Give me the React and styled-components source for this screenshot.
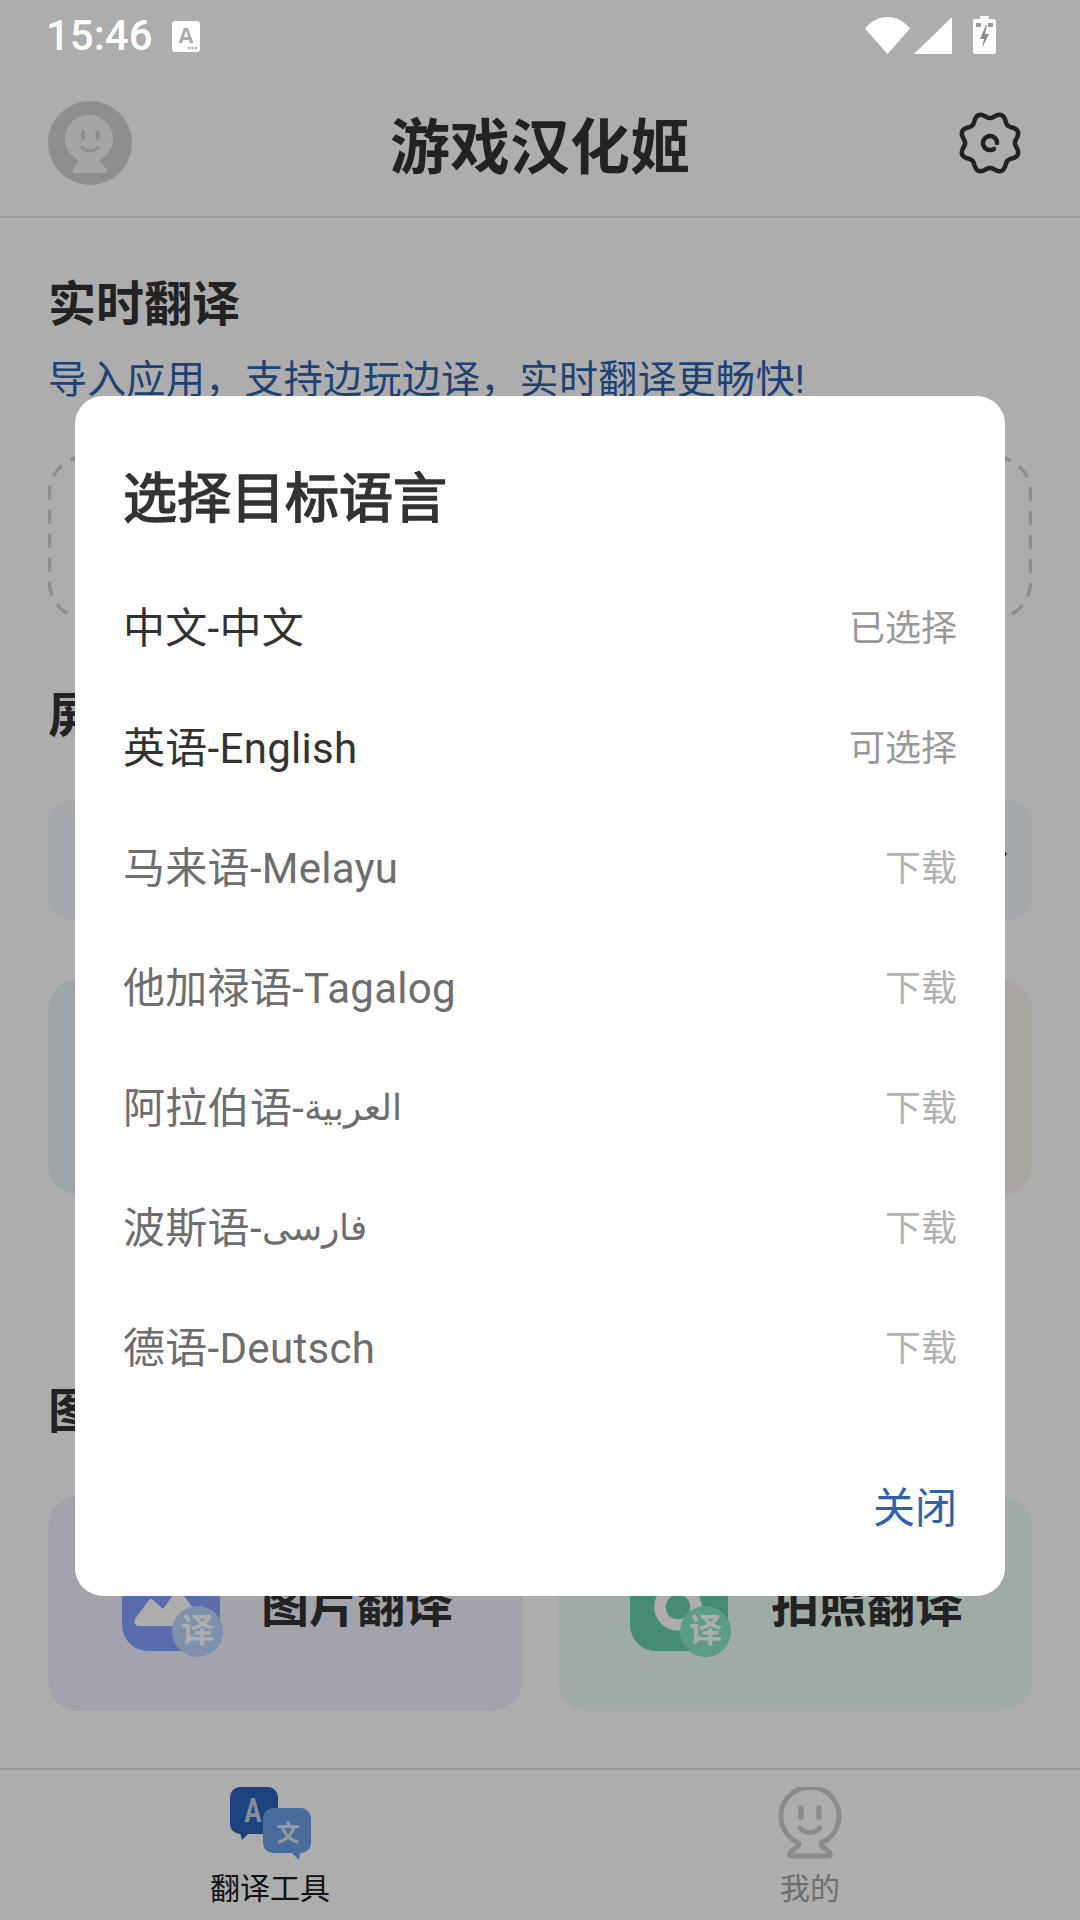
import React from 'react';
import styled, { createGlobalStyle } from 'styled-components';

const FONT = `Roboto, "Noto Sans CJK SC", "Noto Sans", sans-serif`;

const Global = createGlobalStyle`
  html, body { margin: 0; padding: 0; background: #fff; }
  body { font-family: ${FONT}; }
  * { box-sizing: border-box; }
`;

const Screen = styled.div`
  position: relative;
  width: 1080px;
  height: 1920px;
  overflow: hidden;
  background: #fff;
  display: flex;
  flex-direction: column;
`;

const StatusBar = styled.div`
  position: relative;
  z-index: 3;
  height: 72px;
  flex: none;
  display: flex;
  align-items: flex-start;
  justify-content: space-between;
  padding: 17px 84px 0 46px;
  color: #fff;
`;
const StatusLeft = styled.div`
  display: flex;
  align-items: center;
  gap: 19px;
  height: 38px;
`;
const Clock = styled.span`
  font: 500 42px/38px Roboto, sans-serif;
`;
const StatusRight = styled.div`
  display: flex;
  align-items: flex-start;
  gap: 4px;
`;
const Battery = styled.svg`
  margin-left: 17px;
  margin-top: -1px;
`;

const Header = styled.header`
  flex: none;
  height: 146px;
  border-bottom: 2px solid #e6e6e6;
  padding: 0 58px 2px 48px;
  display: flex;
  align-items: center;
  justify-content: space-between;
`;
const AppTitle = styled.h1`
  margin: 12px 0 0 -10px;
  font: 700 60px/70px ${FONT};
  color: #333;
`;

const Main = styled.main`
  flex: 1;
  padding: 0 48px;
  display: flex;
  flex-direction: column;
`;
const SectionTitle = styled.h2`
  margin: ${p => p.$top}px 0 0;
  font: 700 48px/60px ${FONT};
  color: #333;
`;
const Subtitle = styled.p`
  margin: 20px 0 0;
  font: 400 39px/50px ${FONT};
  letter-spacing: 0.3px;
  color: #2f62ab;
`;
const DropBox = styled.div`
  position: relative;
  margin-top: 50px;
  height: 165px;
`;
const DashFrame = styled.svg`
  position: absolute;
  inset: 0;
`;
const WideCard = styled.div`
  margin-top: 54px;
  height: 121px;
  border-radius: 22px;
  background: #f4f8fc;
  display: flex;
  align-items: center;
  justify-content: flex-end;
  padding: 0 24px 14px 0;
  color: #1d4480;
`;
const CardPair = styled.div`
  margin-top: ${p => p.$top}px;
  display: grid;
  grid-template-columns: 474px 474px;
  gap: 36px;
`;
const PlainCard = styled.div`
  height: 215px;
  border-radius: 30px;
  background: ${p => p.$bg};
`;
const ToolCard = styled.div`
  height: 215px;
  border-radius: 30px;
  background: ${p => p.$bg};
  display: flex;
  align-items: center;
  gap: ${p => p.$gap}px;
  padding: 0 0 4px ${p => p.$left}px;
`;
const ToolIcon = styled.div`
  position: relative;
  width: 98px;
  height: 98px;
  border-radius: 26px;
  background: ${p => p.$bg};
  flex: none;
`;
const ToolBadge = styled.span`
  position: absolute;
  right: -3px;
  bottom: -6px;
  width: 51px;
  height: 51px;
  border-radius: 50%;
  background: ${p => p.$bg};
  color: #fff;
  font: 700 33px/49px ${FONT};
  text-align: center;
`;
const ToolName = styled.span`
  padding-top: 8px;
  font: 700 48px/60px ${FONT};
  color: #333;
`;

const Nav = styled.nav`
  flex: none;
  height: 152px;
  border-top: 2px solid #e0e0e0;
  display: grid;
  grid-template-columns: 1fr 1fr;
`;
const NavItem = styled.div`
  display: flex;
  flex-direction: column;
  align-items: center;
  padding-top: 17px;
`;
const NavLabel = styled.span`
  margin-top: ${p => p.$gap}px;
  font: 400 30px/36px ${FONT};
  color: ${p => p.$color};
`;

const Scrim = styled.div`
  position: absolute;
  inset: 0;
  z-index: 2;
  background: rgba(0, 0, 0, 0.32);
  padding: 396px 75px 0;
`;
const Dialog = styled.section`
  width: 930px;
  height: 1200px;
  border-radius: 28px;
  background: #fff;
  padding: 69px 48px 62px;
  display: flex;
  flex-direction: column;
`;
const DialogTitle = styled.h3`
  margin: 0 0 42px;
  font: 400 54px/60px "Noto Sans CJK SC", sans-serif;
  -webkit-text-stroke: 1.6px #333;
  color: #333;
`;
const LangRow = styled.div`
  flex: none;
  height: 120px;
  padding-top: 3px;
  display: flex;
  align-items: center;
  justify-content: space-between;
`;
const LangName = styled.span`
  font: 400 42px/60px ${FONT};
  letter-spacing: 0.3px;
  color: ${p => (p.$ready ? '#333' : '#6e6e6e')};
`;
const ScriptText = styled.span`
  font-size: 36px;
  letter-spacing: 0;
  vertical-align: 3px;
`;
const LangState = styled.span`
  font: 400 36px/50px ${FONT};
  color: ${p => (p.$ready ? '#999' : '#b2b2b2')};
`;
const DialogFooter = styled.div`
  margin-top: auto;
  display: flex;
  justify-content: flex-end;
`;
const CloseButton = styled.span`
  font: 400 42px/50px ${FONT};
  color: #2f62ab;
`;

const gearPath = (() => {
  const pts = [];
  for (let i = 0; i < 240; i++) {
    const t = (i / 240) * Math.PI * 2;
    const r = 27.5 - 2.6 * Math.cos(8 * t);
    pts.push(`${(32 + r * Math.sin(t)).toFixed(2)} ${(32 - r * Math.cos(t)).toFixed(2)}`);
  }
  return `M${pts.join('L')}Z`;
})();

const LANGS = [
  ['中文-中文', '已选择', true],
  ['英语-English', '可选择', true],
  ['马来语-Melayu', '下载', false],
  ['他加禄语-Tagalog', '下载', false],
  ['阿拉伯语-', '下载', false, 'العربية'],
  ['波斯语-', '下载', false, 'فارسی'],
  ['德语-Deutsch', '下载', false],
];

export default function App() {
  return (
    <Screen>
      <Global />
      <StatusBar>
        <StatusLeft>
          <Clock>15:46</Clock>
          <svg width="28" height="31" viewBox="0 0 28 31">
            <rect width="28" height="31" rx="3" fill="#fff" />
            <path d="M6.5 22 12 7h4l5.500 15h-3.600l-1-3h-5.800l-1 3zM11.900 16h4.200L14 9.800z" fill="#adadad" />
            <circle cx="17" cy="27" r="1.200" fill="#adadad" />
            <circle cx="20.500" cy="27" r="1.200" fill="#adadad" />
            <circle cx="24" cy="27" r="1.200" fill="#adadad" />
          </svg>
        </StatusLeft>
        <StatusRight>
          <svg width="45" height="37" viewBox="0 0 45 37">
            <path d="M0 11.500C5.500 4.500 13.500 0 22.500 0S39.500 4.500 45 11.500L22.500 37z" fill="#fff" />
          </svg>
          <svg width="38" height="37" viewBox="0 0 38 37">
            <path d="M38 0v37H0z" fill="#fff" />
          </svg>
          <Battery width="23" height="38" viewBox="0 0 23 38">
            <path d="M7 0h9v3h5a2 2 0 0 1 2 2v31a2 2 0 0 1-2 2H2a2 2 0 0 1-2-2V5a2 2 0 0 1 2-2h5z" fill="#fff" />
            <path d="M3 7h5v4H3zM15 7h5v4h-5z" fill="#9a9a9a" />
            <path d="M13 9l-6 14h4l-2 9 7-14h-4l2-9z" fill="#8a8a8a" />
          </Battery>
        </StatusRight>
      </StatusBar>

      <Header>
        <svg width="84" height="84" viewBox="0 0 84 84">
          <circle cx="42" cy="42" r="42" fill="#d2d2d2" />
          <path d="M30 59a24 24 0 1 1 22 0c0 3 3 5 6 8 2 2 2 5-1 5H27c-3 0-3-3-1-5 3-3 4-5 4-8z" fill="#f3f3f3" />
          <rect x="33" y="29" width="4" height="10" rx="2" fill="#d2d2d2" />
          <rect x="47.500" y="29" width="4" height="10" rx="2" fill="#d2d2d2" />
          <path d="M34 46c3 5 13 5 16 0" fill="none" stroke="#d2d2d2" strokeWidth="3" strokeLinecap="round" />
        </svg>
        <AppTitle>游戏汉化姬</AppTitle>
        <svg width="64" height="64" viewBox="0 0 64 64" fill="none" stroke="#333" strokeWidth="4.500">
          <path d={gearPath} strokeLinejoin="round" />
          <path d="M36 37.800A7 7 0 1 1 39 32" strokeLinecap="round" />
        </svg>
      </Header>

      <Main>
        <SectionTitle $top={57}>实时翻译</SectionTitle>
        <Subtitle>导入应用，支持边玩边译，实时翻译更畅快!</Subtitle>
        <DropBox>
          <DashFrame width="984" height="165" viewBox="0 0 984 165">
            <rect x="1.500" y="1.500" width="981" height="162" rx="36" fill="none" stroke="#d2d2d2" strokeWidth="3.500" strokeDasharray="14 10" />
          </DashFrame>
        </DropBox>
        <SectionTitle $top={66}>屏幕翻译</SectionTitle>
        <WideCard>
          <svg width="14" height="22" viewBox="0 0 14 22" fill="none" stroke="currentColor" strokeWidth="3">
            <path d="M3 3l8 8-8 8" />
          </svg>
        </WideCard>
        <CardPair $top={59}>
          <PlainCard $bg="#ebf5fa" />
          <PlainCard $bg="#faf4eb" />
        </CardPair>
        <SectionTitle $top={187}>图片翻译</SectionTitle>
        <CardPair $top={54}>
          <ToolCard $bg="#f1f1ff" $left={74} $gap={41}>
            <ToolIcon $bg="#869fff">
              <svg width="98" height="98" viewBox="0 0 98 98">
                <path d="M13 66 27 47q2-2 4 0l10 9 13-18q2-2 4 0l27 35H17q-6 0-4-7z" fill="#fff" />
              </svg>
              <ToolBadge $bg="#b8d6ff">译</ToolBadge>
            </ToolIcon>
            <ToolName>图片翻译</ToolName>
          </ToolCard>
          <ToolCard $bg="#eafef3" $left={72} $gap={43}>
            <ToolIcon $bg="#67ceaa">
              <svg width="98" height="98" viewBox="0 0 98 98">
                <circle cx="48" cy="54" r="18" fill="none" stroke="#fff" strokeWidth="11.500" />
              </svg>
              <ToolBadge $bg="#85e6c4">译</ToolBadge>
            </ToolIcon>
            <ToolName>拍照翻译</ToolName>
          </ToolCard>
        </CardPair>
      </Main>

      <Nav>
        <NavItem>
          <svg width="81" height="74" viewBox="0 0 81 74">
            <path d="M10 0h28a10 10 0 0 1 10 10v27a10 10 0 0 1-10 10H18l-6 6-1.500-6H10A10 10 0 0 1 0 37V10A10 10 0 0 1 10 0z" fill="#2c64bc" />
            <text transform="translate(23 35) scale(.76 1)" textAnchor="middle" fontFamily="Roboto, sans-serif" fontWeight="700" fontSize="33" fill="#c7d3e6">A</text>
            <path d="M43 21h28a10 10 0 0 1 10 10v25a10 10 0 0 1-10 10h-1l-1 7-7-7H43a10 10 0 0 1-10-10V31a10 10 0 0 1 10-10z" fill="#6d9fe8" />
            <text x="58" y="54" textAnchor="middle" fontFamily={FONT} fontWeight="700" fontSize="23" fill="#dfe5ee">文</text>
          </svg>
          <NavLabel $gap={10} $color="#1a1a1a">翻译工具</NavLabel>
        </NavItem>
        <NavItem>
          <svg width="64" height="72" viewBox="0 0 64 72" fill="none" stroke="#cdcdcd" strokeWidth="5">
            <path d="M21 56a29 29 0 1 1 22 0c0 3 3 5 7 8 3 2 3 5 0 5H14c-3 0-3-3 0-5 4-3 7-5 7-8z" strokeLinejoin="round" />
            <path d="M23 21v9M41 21v9" strokeWidth="5.500" strokeLinecap="round" />
            <path d="M22 41c5 6 15 6 20 0" strokeLinecap="round" />
          </svg>
          <NavLabel $gap={12} $color="#a2a2a2">我的</NavLabel>
        </NavItem>
      </Nav>

      <Scrim>
        <Dialog>
          <DialogTitle>选择目标语言</DialogTitle>
          {LANGS.map(([name, state, ready, script]) => (
            <LangRow key={name}>
              <LangName $ready={ready}>
                {name}
                {script && <ScriptText>{script}</ScriptText>}
              </LangName>
              <LangState $ready={ready}>{state}</LangState>
            </LangRow>
          ))}
          <DialogFooter>
            <CloseButton>关闭</CloseButton>
          </DialogFooter>
        </Dialog>
      </Scrim>
    </Screen>
  );
}
